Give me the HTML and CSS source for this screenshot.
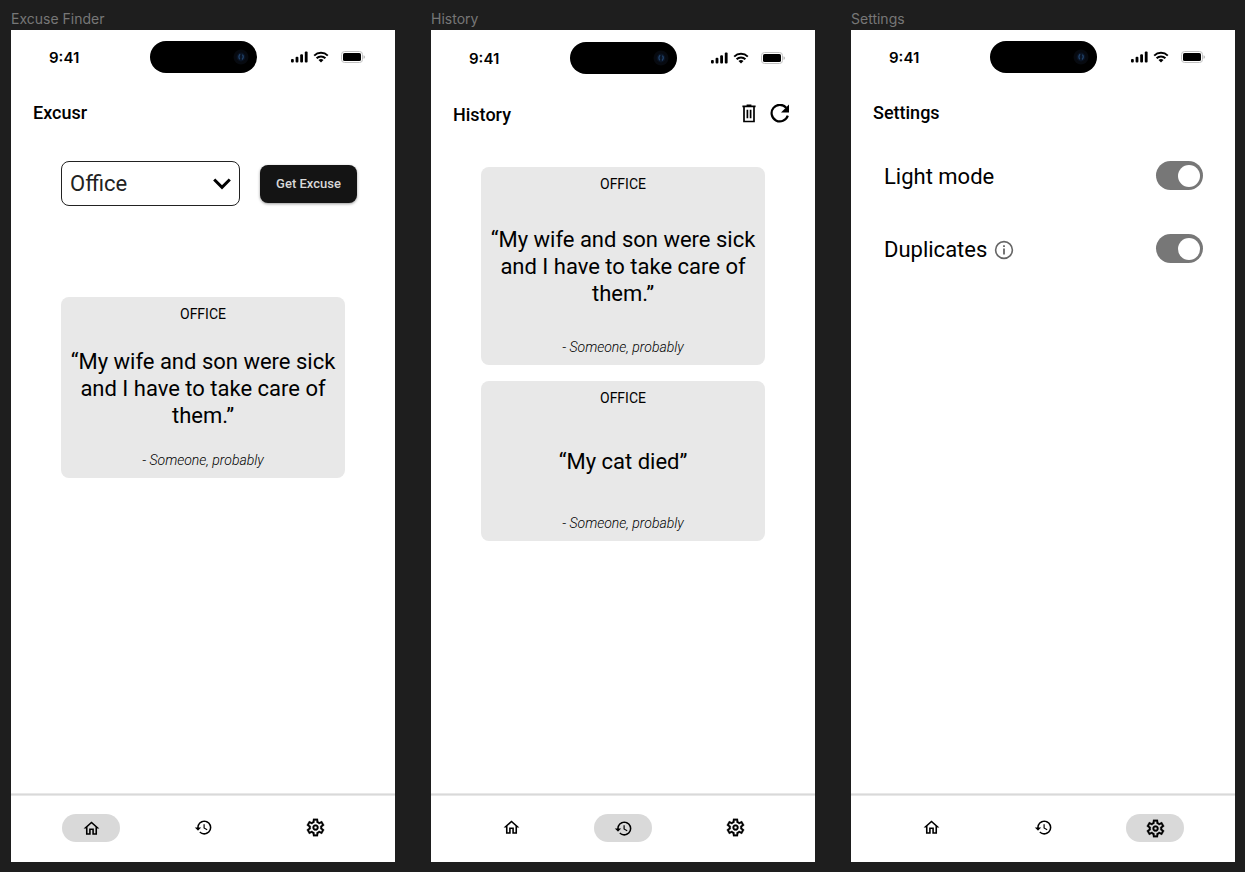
FILE: index.html
```html
<!DOCTYPE html>
<html lang="en">
<head>
<meta charset="utf-8">
<meta name="viewport" content="width=device-width, initial-scale=1">
<title>Excusr</title>
<link rel="stylesheet" href="styles.css">
</head>
<body>
<svg class="defs" aria-hidden="true">
  <symbol id="signal" viewBox="0 0 17 12">
    <rect x="0" y="8" width="2.8" height="3.5" rx="1"/><rect x="4.6" y="5.8" width="2.8" height="5.7" rx="1"/><rect x="9.2" y="3.3" width="2.8" height="8.2" rx="1"/><rect x="13.8" y="0.6" width="2.8" height="10.9" rx="1"/>
  </symbol>
  <symbol id="wifi" viewBox="0 0 16 12">
    <path d="M1.2 4.6a9.8 9.8 0 0 1 13.6 0M3.6 7.2a6.3 6.3 0 0 1 8.8 0" fill="none" stroke="currentColor" stroke-width="2"/>
    <path d="M8 11.6 5.5 9.1a3.6 3.6 0 0 1 5 0z"/>
  </symbol>
  <symbol id="battery" viewBox="0 0 24 12">
    <rect x="0.5" y="0.5" width="21" height="11" rx="3" fill="none" stroke="#c0c0c0"/>
    <rect x="2" y="2" width="18" height="8" rx="1.6"/>
    <path d="M22.700 4.200c1.300.5 1.300 3.100 0 3.600z" fill="#999"/>
  </symbol>
  <symbol id="camera" viewBox="0 0 16 16">
    <circle cx="8" cy="8" r="7.500" fill="#070a10"/><circle cx="8" cy="8" r="4.400" fill="#0a1424"/>
    <path d="M7.200 5.200C5.600 6.200 5.600 9 6.800 10.200M9.400 5.600c1.200 1.200 1.200 3.400-.4 4.800" fill="none" stroke="#23456e" stroke-width="1.300"/>
  </symbol>
  <symbol id="home" viewBox="0 0 24 24">
    <path d="M12 5.690l5 4.500V18h-2v-6H9v6H7v-7.810l5-4.500M12 3L2 12h3v8h6v-6h2v6h6v-8h3L12 3z"/>
  </symbol>
  <symbol id="history" viewBox="0 0 24 24">
    <path d="M13 3a9 9 0 0 0-9 9H1l3.890 3.890.07.14L9 12H6c0-3.870 3.130-7 7-7s7 3.130 7 7-3.130 7-7 7c-1.930 0-3.680-.79-4.940-2.060l-1.420 1.420A8.954 8.954 0 0 0 13 21a9 9 0 0 0 0-18zm-1 5v5l4.280 2.540.72-1.210-3.500-2.080V8H12z"/>
  </symbol>
  <symbol id="gear" viewBox="0 -960 960 960">
    <path stroke="currentColor" stroke-width="12" d="m370-80-16-128q-13-5-24.500-12T307-235l-119 50L78-375l103-78q-1-7-1-13.500v-27q0-6.500 1-13.500L78-585l110-190 119 50q11-8 23-15t24-12l16-128h220l16 128q13 5 24.500 12t22.500 15l119-50 110 190-103 78q1 7 1 13.500v27q0 6.500-2 13.500l103 78-110 190-118-50q-11 8-23 15t-24 12L590-80H370Zm70-80h79l14-106q31-8 57.500-23.500T639-327l99 41 39-68-86-65q5-14 7-29.500t2-31.500q0-16-2-31.500t-7-29.500l86-65-39-68-99 42q-22-23-48.500-38.500T533-694l-13-106h-79l-14 106q-31 8-57.500 23.500T321-633l-99-41-39 68 86 64q-5 15-7 30t-2 32q0 16 2 31t7 30l-86 65 39 68 99-42q22 23 48.500 38.500T427-266l13 106Zm42-180q58 0 99-41t41-99q0-58-41-99t-99-41q-59 0-99.500 41T342-480q0 58 40.500 99t99.500 41Zm0-80q-25 0-42.500-17.500T422-480q0-25 17.500-42.500T482-540q25 0 42.500 17.500T542-480q0 25-17.500 42.500T482-420Z"/>
  </symbol>
</svg>

<main class="board">
  <section class="artboard">
    <h2 class="artboard-label">Excuse Finder</h2>
    <div class="phone">
      <div class="status">
        <span class="status-time">9:41</span>
        <span class="island"><svg width="16" height="16"><use href="#camera"/></svg></span>
        <span class="status-icons"><svg width="17" height="12"><use href="#signal"/></svg><svg width="16" height="12"><use href="#wifi"/></svg><svg class="battery" width="24" height="12"><use href="#battery"/></svg></span>
      </div>
      <header class="header"><h1 class="title">Excusr</h1></header>
      <div class="content finder">
        <form class="picker">
          <div class="select-wrap">
            <select class="select" aria-label="Category"><option>Office</option></select>
            <svg class="chevron" width="18" height="12" viewBox="0 0 18 12" aria-hidden="true"><path d="M1.200 1.500 9 9.300l7.800-7.800" fill="none" stroke="#000" stroke-width="3"/></svg>
          </div>
          <button class="button" type="button">Get Excuse</button>
        </form>
        <article class="card">
          <p class="card-category">OFFICE</p>
          <p class="card-quote">“My wife and son were sick and I have to take care of them.”</p>
          <p class="card-author">- Someone, probably</p>
        </article>
      </div>
      <nav class="nav" aria-label="Excuse Finder tabs">
        <a class="tab tab-active" href="#home" aria-label="Home" aria-current="page"><svg width="19" height="19"><use href="#home"/></svg></a>
        <a class="tab" href="#history" aria-label="History"><svg width="19" height="19"><use href="#history"/></svg></a>
        <a class="tab" href="#gear" aria-label="Settings"><svg width="21" height="21"><use href="#gear"/></svg></a>
      </nav>
    </div>
  </section>

  <section class="artboard">
    <h2 class="artboard-label">History</h2>
    <div class="phone">
      <div class="status status-low">
        <span class="status-time">9:41</span>
        <span class="island"><svg width="16" height="16"><use href="#camera"/></svg></span>
        <span class="status-icons"><svg width="17" height="12"><use href="#signal"/></svg><svg width="16" height="12"><use href="#wifi"/></svg><svg class="battery" width="24" height="12"><use href="#battery"/></svg></span>
      </div>
      <header class="header">
        <h1 class="title">History</h1>
        <div class="actions">
          <button class="icon-button" type="button" aria-label="Clear history"><svg width="14" height="20" viewBox="0 0 14 20"><path d="M.4 2.400h13.200M4.600 1.400h4.800M2 2.500v15h10v-15M5.400 5.700v8.600M8.600 5.700v8.600" fill="none" stroke="#000" stroke-width="1.700"/></svg></button>
          <button class="icon-button" type="button" aria-label="Refresh"><svg width="20" height="20" viewBox="0 0 20 20"><path d="M16.200 3.700A8.300 8.300 0 1 0 17.800 11.700" fill="none" stroke="#000" stroke-width="2.200"/><path d="M19 .5v8h-8z"/></svg></button>
        </div>
      </header>
      <div class="content history">
        <article class="card card-medium">
          <p class="card-category">OFFICE</p>
          <p class="card-quote">“My wife and son were sick and I have to take care of them.”</p>
          <p class="card-author">- Someone, probably</p>
        </article>
        <article class="card card-airy">
          <p class="card-category">OFFICE</p>
          <p class="card-quote">“My cat died”</p>
          <p class="card-author">- Someone, probably</p>
        </article>
      </div>
      <nav class="nav" aria-label="History tabs">
        <a class="tab" href="#home" aria-label="Home"><svg width="19" height="19"><use href="#home"/></svg></a>
        <a class="tab tab-active" href="#history" aria-label="History" aria-current="page"><svg width="19" height="19"><use href="#history"/></svg></a>
        <a class="tab" href="#gear" aria-label="Settings"><svg width="21" height="21"><use href="#gear"/></svg></a>
      </nav>
    </div>
  </section>

  <section class="artboard">
    <h2 class="artboard-label">Settings</h2>
    <div class="phone">
      <div class="status">
        <span class="status-time">9:41</span>
        <span class="island"><svg width="16" height="16"><use href="#camera"/></svg></span>
        <span class="status-icons"><svg width="17" height="12"><use href="#signal"/></svg><svg width="16" height="12"><use href="#wifi"/></svg><svg class="battery" width="24" height="12"><use href="#battery"/></svg></span>
      </div>
      <header class="header"><h1 class="title">Settings</h1></header>
      <div class="content settings">
        <div class="setting">
          <label class="setting-label" for="light-mode">Light mode</label>
          <input class="toggle" id="light-mode" type="checkbox" role="switch" checked>
        </div>
        <div class="setting">
          <label class="setting-label" for="duplicates">Duplicates
            <svg width="20" height="20" viewBox="0 0 20 20" aria-hidden="true"><circle cx="10" cy="10" r="8.400" fill="none" stroke="#666" stroke-width="1.600"/><path d="M9.100 5.300h1.800v1.800H9.100zM9.100 8.600h1.800v6H9.100z" fill="#666"/></svg>
          </label>
          <input class="toggle" id="duplicates" type="checkbox" role="switch" checked>
        </div>
      </div>
      <nav class="nav" aria-label="Settings tabs">
        <a class="tab" href="#home" aria-label="Home"><svg width="19" height="19"><use href="#home"/></svg></a>
        <a class="tab" href="#history" aria-label="History"><svg width="19" height="19"><use href="#history"/></svg></a>
        <a class="tab tab-active" href="#gear" aria-label="Settings" aria-current="page"><svg width="21" height="21"><use href="#gear"/></svg></a>
      </nav>
    </div>
  </section>
</main>
</body>
</html>
```

FILE: styles.css
```css
* {
  box-sizing: border-box;
}

body {
  margin: 0;
  background: #1e1e1e;
  color: #000;
  font-family: Roboto, "Liberation Sans", sans-serif;
}

h1,
h2,
p {
  margin: 0;
  font-weight: 400;
}

svg {
  display: block;
  fill: currentColor;
}

.defs {
  position: absolute;
  width: 0;
  height: 0;
}

.board {
  display: grid;
  grid-template-columns: repeat(3, 1fr);
  gap: 36px;
  min-height: 100vh;
  padding: 10px 10px 10px 11px;
}

.artboard {
  display: flex;
  flex-direction: column;
}

.artboard-label {
  height: 20px;
  color: #777;
  font: 400 14px/18px Inter, sans-serif;
}

.phone {
  flex: 1;
  display: flex;
  flex-direction: column;
  background: #fff;
}

/* Status bar */
.status {
  display: grid;
  grid-template-columns: 1fr 107px 1fr;
  align-items: center;
  padding: 11px 30px 0;
}

.status-low {
  padding-top: 12px;
  margin-bottom: 1px;
}

.status-time {
  padding: 2px 0 0 8px;
  font: 600 15px/30px Inter, sans-serif;
}

.island {
  display: flex;
  align-items: center;
  justify-content: flex-end;
  height: 32px;
  padding-right: 8px;
  border-radius: 16px;
  background: #000;
}

.status-icons {
  display: flex;
  align-items: center;
  justify-content: flex-end;
  gap: 5px;
}

.battery {
  margin-left: 7px;
}

/* Page header */
.header {
  display: flex;
  align-items: center;
  justify-content: space-between;
  height: 24px;
  margin: 27px 25px 0 22px;
}

.title {
  padding-top: 1px;
  font-size: 18px;
  font-weight: 500;
  line-height: 24px;
}

.actions {
  display: flex;
  gap: 14px;
}

.icon-button {
  padding: 0;
  border: 0;
  background: none;
  color: #000;
}

/* Content */
.content {
  flex: 1;
  padding: 0 50px;
}

.finder {
  padding-top: 37px;
}

.history {
  display: flex;
  flex-direction: column;
  gap: 16px;
  padding-top: 41px;
}

.settings {
  display: flex;
  flex-direction: column;
  gap: 44px;
  padding: 37px 32px 0 33px;
}

.picker {
  display: flex;
  align-items: center;
  gap: 20px;
  margin: 0 -12px 91px 0;
}

.select-wrap {
  position: relative;
  flex: 1;
}

.select {
  display: block;
  width: 100%;
  height: 45px;
  padding: 0 36px 0 8px;
  border: 1px solid #222;
  border-radius: 8px;
  background: #fff;
  color: #222;
  font: 400 22px/27px Roboto, sans-serif;
  appearance: none;
}

.chevron {
  position: absolute;
  top: 17px;
  right: 9px;
  pointer-events: none;
}

.button {
  width: 97px;
  height: 38px;
  padding: 0;
  border: 0;
  border-radius: 8px;
  background: #141414;
  box-shadow: 0 1px 3px rgba(0, 0, 0, 0.4);
  color: #d8d8d8;
  font: 500 13px/16px Roboto, sans-serif;
}

.card {
  padding: 9px 4px;
  border-radius: 8px;
  background: #e8e8e8;
  text-align: center;
}

.card-category {
  font-size: 14px;
  line-height: 16px;
}

.card-quote {
  margin: 26px 0 22px;
  font-size: 22px;
  line-height: 27px;
}

.card-author {
  font-size: 14px;
  font-style: italic;
  font-weight: 300;
  line-height: 18px;
}

.card-medium .card-quote {
  margin: 34px 0 31px;
}

.card-airy .card-quote {
  margin: 42px 0 39px;
}

/* Settings */
.setting {
  display: flex;
  align-items: center;
  justify-content: space-between;
  font-size: 22px;
  line-height: 27px;
}

.setting-label {
  display: flex;
  align-items: center;
  gap: 7px;
  padding-top: 2px;
}

.toggle {
  display: flex;
  align-items: center;
  width: 47px;
  height: 29px;
  margin: 0;
  padding: 3px;
  border-radius: 15px;
  background: #aaa;
  appearance: none;
}

.toggle::before {
  content: "";
  width: 22px;
  height: 22px;
  border-radius: 50%;
  background: #fff;
}

.toggle:checked {
  justify-content: flex-end;
  background: #777;
}

/* Bottom navigation */
.nav {
  display: flex;
  justify-content: space-between;
  padding: 19px 51px 20px;
  border-top: 1px solid #d9d9d9;
  box-shadow: 0 -1px 0 #e8e8e8, inset 0 1px 0 #e8e8e8;
}

.tab {
  display: flex;
  align-items: center;
  justify-content: center;
  width: 58px;
  height: 28px;
  padding-bottom: 1px;
  border-radius: 14px;
  color: #000;
}

.tab-active {
  padding: 1px 0 0;
  background: #d9d9d9;
}
```
